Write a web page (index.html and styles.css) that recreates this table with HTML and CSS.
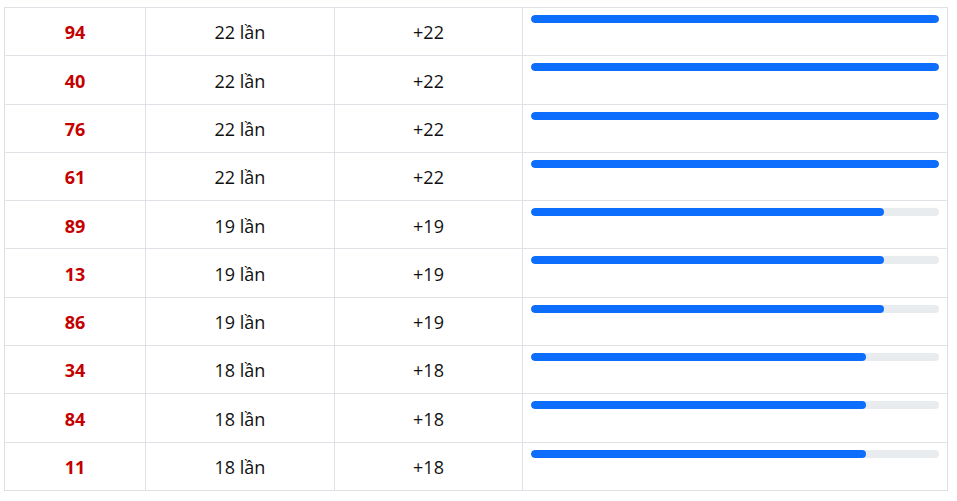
FILE: index.html
```html
<!DOCTYPE html>
<html lang="vi">
<head>
<meta charset="utf-8">
<title>Thống kê</title>
<link rel="stylesheet" href="styles.css">
</head>
<body>
<div class="wrap">
  <div class="stats">
    <div class="cell num">94</div><div class="cell">22 lần</div><div class="cell">+22</div><div class="cell barcell"><div class="track"><div class="fill" style="width:100%"></div></div></div>
    <div class="cell num">40</div><div class="cell">22 lần</div><div class="cell">+22</div><div class="cell barcell"><div class="track"><div class="fill" style="width:100%"></div></div></div>
    <div class="cell num">76</div><div class="cell">22 lần</div><div class="cell">+22</div><div class="cell barcell"><div class="track"><div class="fill" style="width:100%"></div></div></div>
    <div class="cell num">61</div><div class="cell">22 lần</div><div class="cell">+22</div><div class="cell barcell"><div class="track"><div class="fill" style="width:100%"></div></div></div>
    <div class="cell num">89</div><div class="cell">19 lần</div><div class="cell">+19</div><div class="cell barcell"><div class="track"><div class="fill" style="width:86.6%"></div></div></div>
    <div class="cell num">13</div><div class="cell">19 lần</div><div class="cell">+19</div><div class="cell barcell"><div class="track"><div class="fill" style="width:86.6%"></div></div></div>
    <div class="cell num">86</div><div class="cell">19 lần</div><div class="cell">+19</div><div class="cell barcell"><div class="track"><div class="fill" style="width:86.6%"></div></div></div>
    <div class="cell num">34</div><div class="cell">18 lần</div><div class="cell">+18</div><div class="cell barcell"><div class="track"><div class="fill" style="width:82%"></div></div></div>
    <div class="cell num">84</div><div class="cell">18 lần</div><div class="cell">+18</div><div class="cell barcell"><div class="track"><div class="fill" style="width:82%"></div></div></div>
    <div class="cell num">11</div><div class="cell">18 lần</div><div class="cell">+18</div><div class="cell barcell"><div class="track"><div class="fill" style="width:82%"></div></div></div>
  </div>
</div>
</body>
</html>
```
FILE: styles.css
```css
html, body {
  margin: 0;
  padding: 0;
  background: #ffffff;
}
body {
  font-family: "Open Sans", "Noto Sans", sans-serif;
  font-size: 18px;
  color: #111111;
}
.wrap {
  padding: 7px 9px 0 4px;
}
.stats {
  display: grid;
  grid-template-columns: 141px 189px 188px 425px;
  grid-auto-rows: 48.3px;
  border-left: 1px solid #dee2e6;
  border-top: 1px solid #dee2e6;
}
.cell {
  border-right: 1px solid #dee2e6;
  border-bottom: 1px solid #dee2e6;
  display: flex;
  align-items: center;
  justify-content: center;
  padding-top: 1.5px;
  line-height: 24px;
}
.num {
  color: #c40000;
  font-weight: 700;
}
.barcell {
  display: block;
  padding: 7px 8px 0 8px;
}
.track {
  height: 8px;
  border-radius: 4px;
  background: #e9ecef;
  overflow: hidden;
}
.fill {
  height: 100%;
  background: #0d6efd;
  border-radius: 4px;
}
```
